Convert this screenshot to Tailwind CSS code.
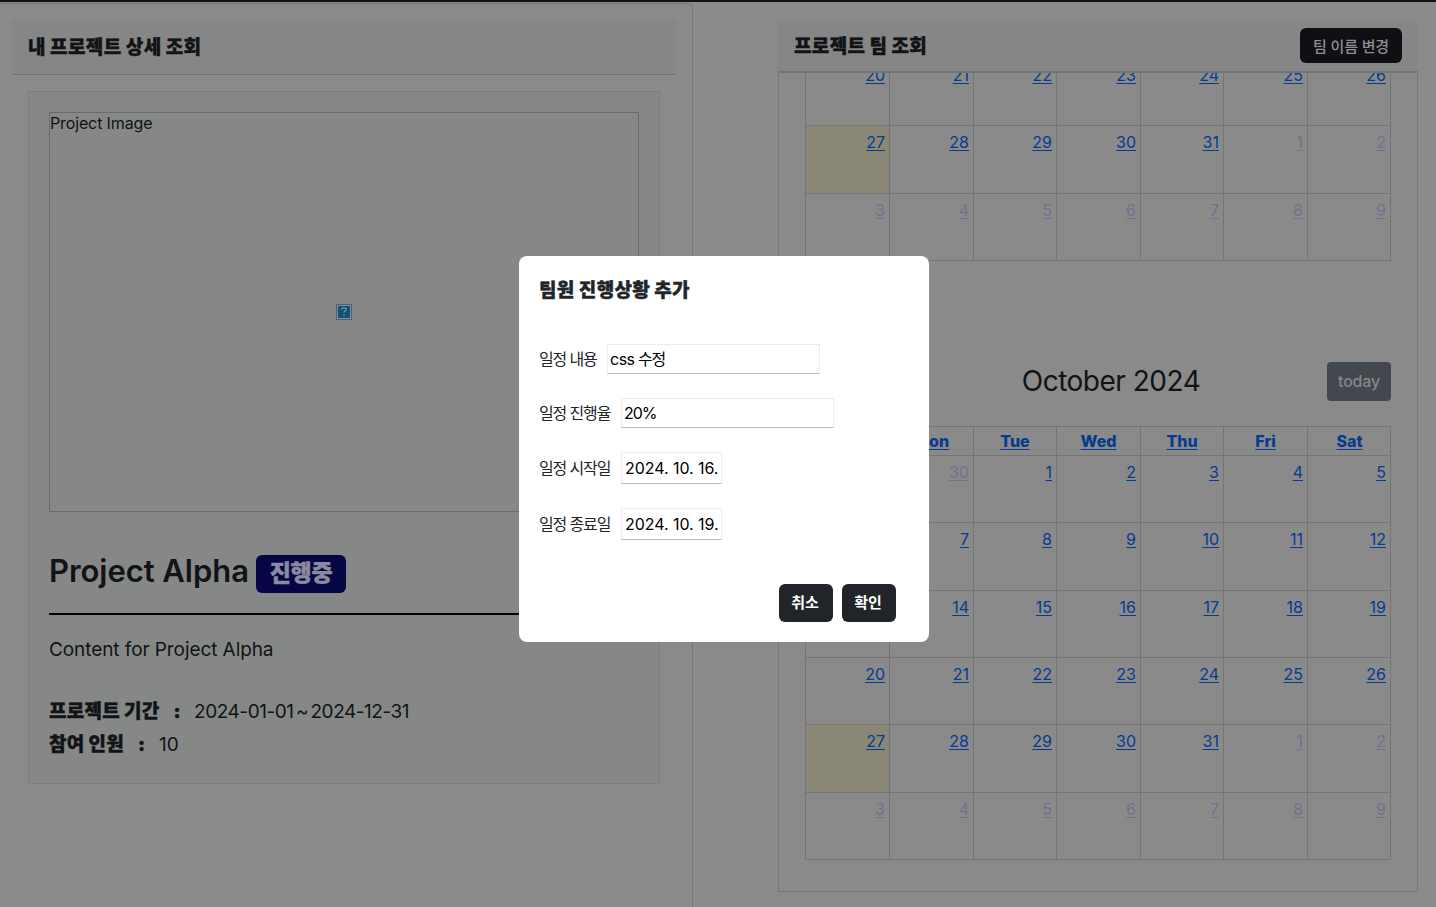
<!DOCTYPE html>
<html lang="ko">
<head>
<meta charset="utf-8">
<title>프로젝트</title>
<script src="https://cdn.jsdelivr.net/npm/@tailwindcss/browser@4"></script>
</head>
<body class="w-[1436px] h-[907px] overflow-hidden bg-[#8a8a8a] font-['Inter','Noto_Sans_CJK_KR',sans-serif] text-[#111316] text-base">
<div class="relative flex flex-col h-[907px] border-t-2 border-[#121212]">
  <main class="flex h-[905px] items-start">
    <section class="mt-px w-[693px] h-[910px] shrink-0 border-t border-r border-[#767676] rounded-tr-md pt-4 pl-3 pr-4">
      <header class="h-[55px] bg-[#868686] border-b border-[#707070] rounded-t flex items-center px-4">
        <h2 class="text-[19px] font-black leading-none whitespace-pre tracking-[0.4px] [-webkit-text-stroke:0.4px]">내 프로젝트 상세 조회</h2>
      </header>
      <article class="mt-4 mx-4 h-[693px] bg-[#858886] border border-[#7b7e7d] p-5">
        <div class="relative h-[400px] w-[590px] border border-[#696b6a]">
          <p class="leading-[20px] tracking-[-0.13px]">Project Image</p>
          <svg class="absolute left-[286px] top-[191px]" width="16" height="16" viewBox="0 0 16 16"><rect width="16" height="16" fill="#4b5f7b"/><rect x="1" y="1" width="14" height="14" fill="#8b8e8e"/><rect x="2" y="2" width="12" height="12" fill="#0d5478"/><path d="M5.6 5.6c0-1.2 1-1.8 2.3-1.8s2.2.6 2.2 1.7c0 1.5-2.1 1.6-2.1 3.1M8 10.2v1.6" fill="none" stroke="#7d9aa8" stroke-width="1.2"/></svg>
        </div>
        <div class="mt-10 h-[63px] border-b-2 border-black flex items-start">
          <h1 class="text-[31px] font-semibold leading-[37px] w-[207px] whitespace-pre tracking-[-0.05px]">Project Alpha</h1>
          <div class="mt-[3px] w-[90px] h-[38px] rounded-md bg-[#060644] text-[#8c8aa0] text-[23px] font-black leading-[37px] text-center tracking-[-0.3px] [-webkit-text-stroke:0.4px]">진행중</div>
        </div>
        <p class="mt-5 text-[19px] leading-[30px] tracking-[-0.08px]">Content for Project Alpha</p>
        <div class="mt-[30px] text-[19px] leading-[33px]">
          <div class="flex"><b class="font-black w-[145px] whitespace-pre tracking-[0.25px] [-webkit-text-stroke:0.4px]">프로젝트 기간<span class="ml-[14px]">:</span></b><span class="tracking-[-0.45px] [word-spacing:-2.5px]">2024-01-01 ~ 2024-12-31</span></div>
          <div class="flex"><b class="font-black w-[110px] whitespace-pre tracking-[0.25px] [-webkit-text-stroke:0.4px]">참여 인원<span class="ml-[14px]">:</span></b><span>10</span></div>
        </div>
      </article>
    </section>
    <section class="ml-[85px] mt-[18px] w-[640px] shrink-0">
      <header class="h-[53px] bg-[#868686] border-b-2 border-[#737373] rounded-t flex items-center justify-between px-4">
        <h2 class="pt-0.5 text-[19px] font-black leading-none whitespace-pre tracking-[0.35px] [-webkit-text-stroke:0.4px]">프로젝트 팀 조회</h2>
        <button class="w-[102px] h-[35px] rounded-md bg-[#0e1013] text-[#8f8f8f] text-[15px] font-medium whitespace-pre leading-[37px] tracking-[-0.15px]">팀 이름 변경</button>
      </header>
      <div class="h-[819px] border border-t-0 border-[#777] overflow-hidden px-[26px]">
        <div id="upper" class="-mt-[15px] w-[586px] grid grid-cols-[84px_84px_83px_84px_83px_84px_84px] border-r border-b border-[#757575]"></div>
        <div class="mt-[101px] flex h-[39px] items-center justify-between w-[586px]">
          <span class="w-[64px]"></span>
          <h3 class="ml-[26px] text-[28px] leading-[39px] whitespace-pre tracking-[-0.5px]">October 2024</h3>
          <button class="w-[64px] h-[39px] pb-0.5 rounded bg-[#42484d] text-[#858789] text-base font-medium tracking-[-0.2px]">today</button>
        </div>
        <div id="lower" class="mt-[25px] w-[586px] grid grid-cols-[84px_84px_83px_84px_83px_84px_84px] border-r border-b border-[#757575]"></div>
      </div>
    </section>
  </main>

  <div role="dialog" class="absolute left-[519px] top-[254px] w-[410px] h-[386px] rounded-lg bg-white text-[#212529] px-5 pt-[21px]">
    <h2 class="text-[19px] font-black leading-[28px] whitespace-pre tracking-[0.35px] [-webkit-text-stroke:0.4px]">팀원 진행상황 추가</h2>
    <div class="mt-[39px] flex flex-col gap-6 text-base">
      <label class="flex items-center gap-[10px] h-[30px] whitespace-pre"><span class="w-[58px] tracking-[-1.15px]">일정 내용</span><span class="w-[213px] h-[30px] border border-[#ebebeb] border-b-[#bcbcbc] text-black pl-[2px] leading-[28px] tracking-[-1.1px]"><span class="tracking-[-0.5px]">css</span> 수정</span></label>
      <label class="flex items-center gap-[10px] h-[30px] whitespace-pre"><span class="w-[72px] tracking-[-1.15px]">일정 진행율</span><span class="w-[213px] h-[30px] border border-[#ebebeb] border-b-[#bcbcbc] text-black pl-[2px] leading-[28px] tracking-[-1px]">20%</span></label>
      <label class="flex items-center gap-[10px] h-[32px] whitespace-pre"><span class="w-[72px] tracking-[-1.15px]">일정 시작일</span><span class="w-[101px] h-[32px] border border-[#ebebeb] border-b-[#bcbcbc] text-black pl-[3px] leading-[30px] tracking-[-0.05px]">2024. 10. 16.</span></label>
      <label class="flex items-center gap-[10px] h-[32px] whitespace-pre"><span class="w-[72px] tracking-[-1.15px]">일정 종료일</span><span class="w-[101px] h-[32px] border border-[#ebebeb] border-b-[#bcbcbc] text-black pl-[3px] leading-[30px] tracking-[-0.05px]">2024. 10. 19.</span></label>
    </div>
    <div class="mt-11 mr-[13px] flex justify-end gap-[9px]">
      <button class="w-[54px] h-[38px] rounded-md bg-[#212529] text-white text-[15px] font-bold pr-0.5">취소</button>
      <button class="w-[54px] h-[38px] rounded-md bg-[#212529] text-white text-[15px] font-bold pr-0.5">확인</button>
    </div>
  </div>
</div>
<script>
const row = (days, h, muted = () => false) => days.map((d, i) =>
  `<div class="${d === 27 ? 'bg-[#8a8777]' : ''} ${i === 6 ? 'pr-[5px]' : 'pr-1'} border-t border-l border-[#757575] pt-1 text-right leading-6" style="height:${h}px"><a class="underline underline-offset-2 decoration-1 ${muted(d) ? 'text-[#70738f]' : 'text-[#063b8e]'}">${d}</a></div>`
).join('');
const seq = (a) => Array.from({ length: 7 }, (_, i) => a + i);
const last = [27, 28, 29, 30, 31, 1, 2];
document.getElementById('upper').innerHTML =
  row(seq(20), 67) + row(last, 68, d => d < 3) + row(seq(3), 67, () => true);
document.getElementById('lower').innerHTML =
  ['Sun', 'Mon', 'Tue', 'Wed', 'Thu', 'Fri', 'Sat'].map(d => `<div class="h-[29px] border-t border-l border-[#757575] text-center leading-[28px] font-extrabold"><a class="underline underline-offset-2 decoration-1 text-[#063b8e]">${d}</a></div>`).join('') +
  row([29, 30, 1, 2, 3, 4, 5], 67, d => d > 28) + row(seq(6), 68) + row(seq(13), 67) + row(seq(20), 67) +
  row(last, 68, d => d < 3) + row(seq(3), 67, () => true);
</script>
</body>
</html>
